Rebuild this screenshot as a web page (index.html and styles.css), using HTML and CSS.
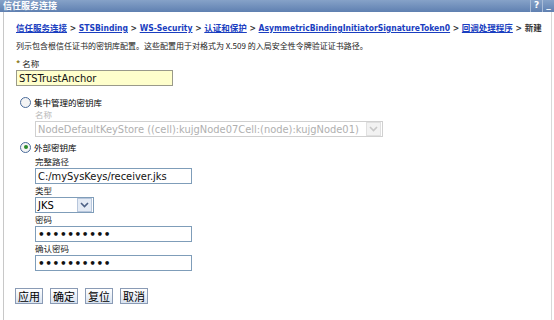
FILE: index.html
```html
<!DOCTYPE html>
<html lang="zh">
<head>
    <meta charset="UTF-8">
    <title>信任服务连接</title>
    <link rel="stylesheet" href="styles.css">
</head>
<body>
    <div class="title-bar">
        <span class="title">信任服务连接</span>
        <span class="title-buttons">
            <span class="tb-btn">?</span>
            <span class="tb-btn">_</span>
        </span>
    </div>

    <div class="content">
        <div class="breadcrumb">
            <a href="#" class="cjk">信任服务连接</a> <span class="sep">&gt;</span>
            <a href="#">STSBinding</a> <span class="sep">&gt;</span>
            <a href="#">WS-Security</a> <span class="sep">&gt;</span>
            <a href="#" class="cjk">认证和保护</a> <span class="sep">&gt;</span>
            <a href="#">AsymmetricBindingInitiatorSignatureToken0</a> <span class="sep">&gt;</span>
            <a href="#" class="cjk">回调处理程序</a> <span class="sep">&gt;</span>
            <span class="current cjk">新建</span>
        </div>
        <div class="desc">列示包含根信任证书的密钥库配置。这些配置用于对格式为 X.509 的入局安全性令牌验证证书路径。</div>

        <div class="field">
            <label class="label"><span class="req">*</span> 名称</label>
            <input class="text name-input" type="text" value="STSTrustAnchor">
        </div>

        <div class="radio-row">
            <span class="radio"></span>
            <span class="radio-label">集中管理的密钥库</span>
        </div>
        <div class="sub">
            <label class="label disabled">名称</label>
            <div class="select wide disabled">
                <span class="select-text">NodeDefaultKeyStore ((cell):kujgNode07Cell:(node):kujgNode01)</span>
                <span class="arrow"><svg width="9" height="6" viewBox="0 0 9 6"><path d="M1 1 L4.5 4.5 L8 1" fill="none" stroke="#c8c8c8" stroke-width="1.6"/></svg></span>
            </div>
        </div>

        <div class="radio-row second">
            <span class="radio checked"></span>
            <span class="radio-label">外部密钥库</span>
        </div>
        <div class="sub external">
            <label class="label">完整路径</label>
            <input class="text path-input" type="text" value="C:/mySysKeys/receiver.jks">
            <label class="label">类型</label>
            <div class="select small">
                <span class="select-text">JKS</span>
                <span class="arrow"><svg width="9" height="6" viewBox="0 0 9 6"><path d="M1 1 L4.5 4.5 L8 1" fill="none" stroke="#4d6185" stroke-width="1.6"/></svg></span>
            </div>
            <label class="label">密码</label>
            <input class="text pw-input" type="password" value="mypassword">
            <label class="label">确认密码</label>
            <input class="text pw-input" type="password" value="mypassword">
        </div>

        <div class="buttons">
            <button>应用</button>
            <button>确定</button>
            <button>复位</button>
            <button>取消</button>
        </div>
    </div>
</body>
</html>
```

FILE: styles.css
```css
body {
    margin: 0;
    padding: 0;
    background: #fff;
    font-family: "DejaVu Sans", "Noto Sans CJK SC", sans-serif;
    font-size: 10px;
    color: #000;
    overflow: hidden;
}

.title-bar {
    display: flex;
    justify-content: space-between;
    align-items: center;
    height: 12px;
    background: linear-gradient(#86a2c8, #5f80b1);
    color: #fff;
    padding-left: 3px;
}

.title {
    font-family: "Noto Sans CJK SC", sans-serif;
    font-weight: bold;
    font-size: 9px;
    line-height: 12px;
}

.title-buttons {
    display: flex;
    height: 12px;
}

.tb-btn {
    width: 11px;
    height: 12px;
    line-height: 11px;
    text-align: center;
    font-weight: bold;
    font-size: 9px;
    border-left: 1px solid #a9bcd8;
}

.content {
    margin: 0 2px 0 3px;
    border-left: 1px solid #c8c8c8;
    border-right: 1px solid #d8d8d8;
    padding: 9px 0 0 12px;
    min-height: 308px;
    box-sizing: border-box;
}

.breadcrumb {
    font-family: "DejaVu Sans Condensed", "Noto Sans CJK SC", sans-serif;
    font-size: 8.5px;
    font-weight: bold;
    line-height: 12px;
    white-space: nowrap;
}

.breadcrumb .cjk {
    font-family: "Noto Sans CJK SC", sans-serif;
    font-size: 8.5px;
}

.breadcrumb a {
    color: #1a3ec0;
    text-decoration: underline;
}

.sep {
    color: #333;
}

.current {
    color: #333;
}

.desc {
    margin-top: 6px;
    font-family: "Noto Sans CJK SC", sans-serif;
    font-size: 8px;
    line-height: 12px;
    color: #222;
}

.field {
    margin-top: 6px;
}

.label {
    display: block;
    font-family: "Noto Sans CJK SC", sans-serif;
    font-size: 8.5px;
    line-height: 11px;
    margin-bottom: 1px;
    color: #222;
}

.label.disabled {
    color: #b8b8b8;
}

.req {
    color: #8a7a1a;
    font-weight: bold;
}

.text {
    display: block;
    box-sizing: border-box;
    height: 16px;
    margin: 0 0 1px 0;
    padding: 0 2px;
    border: 1px solid #7f9db9;
    font-family: "DejaVu Sans Condensed", sans-serif;
    font-size: 11px;
    color: #111;
    background: #fff;
}

.name-input {
    width: 157px;
    background: #ffffcc;
    border-color: #9a9a8a;
}

.radio-row {
    display: flex;
    align-items: center;
    gap: 3px;
    height: 12px;
    margin-top: 10px;
    margin-left: 4px;
}

.radio-row.second {
    margin-top: 4px;
}

.radio {
    width: 11px;
    height: 11px;
    box-sizing: border-box;
    border: 1px solid #4a6b9a;
    border-radius: 50%;
    background: #f4f4f4;
    display: flex;
    align-items: center;
    justify-content: center;
}

.radio.checked::after {
    content: "";
    width: 4px;
    height: 4px;
    border-radius: 50%;
    background: #2a8a2a;
}

.radio-label {
    font-family: "Noto Sans CJK SC", sans-serif;
    font-size: 8.5px;
    line-height: 12px;
}

.sub {
    padding-left: 19px;
    margin-top: 1px;
}

.sub.external {
    margin-top: 3px;
}

.select {
    display: flex;
    align-items: center;
    justify-content: space-between;
    box-sizing: border-box;
    height: 16px;
    border: 1px solid #7f9db9;
    padding-left: 2px;
    margin-bottom: 1px;
    font-family: "DejaVu Sans Condensed", sans-serif;
    font-size: 11px;
    white-space: nowrap;
}

.select.wide {
    width: 348px;
}

.select.disabled {
    color: #b0b0b0;
    border-color: #d0d0d0;
}

.select.small {
    width: 59px;
}

.arrow {
    width: 13px;
    height: 12px;
    margin-right: 1px;
    display: flex;
    align-items: center;
    justify-content: center;
    background: #e4ebf5;
    border: 1px solid #b7c6dc;
}

.select.disabled .arrow {
    background: #f2f2f2;
    border-color: #e0e0e0;
}

.path-input,
.pw-input {
    width: 157px;
}

.pw-input {
    font-family: "DejaVu Sans", sans-serif;
    font-size: 10.5px;
    font-weight: bold;
    letter-spacing: 0.6px;
}

.buttons {
    display: flex;
    gap: 7px;
    margin-top: 17px;
    margin-left: -1px;
}

.buttons button {
    font-family: "Noto Sans CJK SC", sans-serif;
    font-size: 11px;
    line-height: 14px;
    height: 16px;
    padding: 0 2px;
    border: 1px solid #8a9bb5;
    background: linear-gradient(#ffffff, #d9e3f0);
    color: #000;
}
```
